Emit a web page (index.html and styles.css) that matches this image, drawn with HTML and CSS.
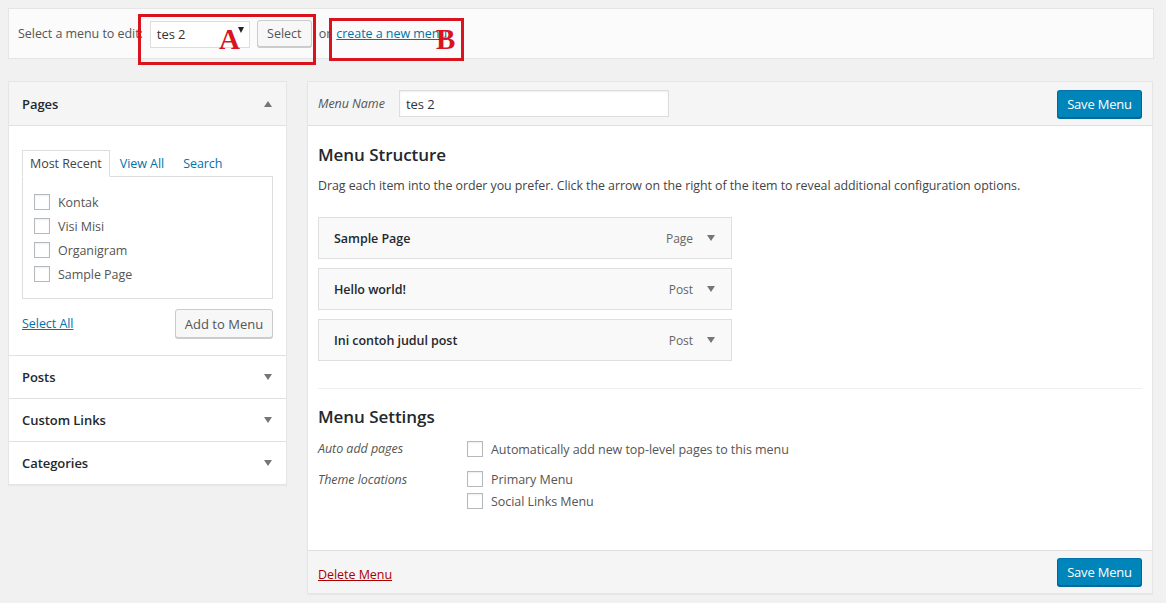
FILE: index.html
```html
<!DOCTYPE html>
<html>
<head>
<meta charset="utf-8">
<link rel="stylesheet" href="styles.css">
</head>
<body>
<div class="wrap">
  <div class="manage-menus">
    <span class="label">Select a menu to edit:</span>
    <div class="select-box"><span>tes 2</span><span class="caret"></span></div>
    <button class="btn">Select</button>
    <span class="or">or</span>
    <a class="link" href="#">create a new menu</a>
    <div class="mark mark-a"></div>
    <div class="mark mark-b"></div>
    <span class="letter letter-a">A</span>
    <span class="letter letter-b">B</span>
  </div>

  <div class="columns">
    <div class="side">
      <div class="acc open">
        <div class="acc-head head-gray"><span class="acc-title">Pages</span><span class="tri up"></span></div>
        <div class="acc-body">
          <div class="tabs">
            <span class="tab active">Most Recent</span>
            <span class="tab">View All</span>
            <span class="tab">Search</span>
          </div>
          <div class="tab-panel">
            <label class="chk"><span class="box"></span>Kontak</label>
            <label class="chk"><span class="box"></span>Visi Misi</label>
            <label class="chk"><span class="box"></span>Organigram</label>
            <label class="chk"><span class="box"></span>Sample Page</label>
          </div>
          <div class="acc-actions">
            <a class="link" href="#">Select All</a>
            <button class="btn add">Add to Menu</button>
          </div>
        </div>
      </div>
      <div class="acc"><div class="acc-head"><span class="acc-title">Posts</span><span class="tri"></span></div></div>
      <div class="acc"><div class="acc-head"><span class="acc-title">Custom Links</span><span class="tri"></span></div></div>
      <div class="acc"><div class="acc-head"><span class="acc-title">Categories</span><span class="tri"></span></div></div>
    </div>

    <div class="main">
      <div class="main-head">
        <span class="menu-name-label">Menu Name</span>
        <div class="name-input">tes 2</div>
        <button class="btn primary">Save Menu</button>
      </div>
      <div class="main-body">
        <h3 class="h3">Menu Structure</h3>
        <p class="desc">Drag each item into the order you prefer. Click the arrow on the right of the item to reveal additional configuration options.</p>
        <div class="items">
          <div class="item"><span class="item-title">Sample Page</span><span class="item-type">Page</span><span class="tri"></span></div>
          <div class="item"><span class="item-title">Hello world!</span><span class="item-type">Post</span><span class="tri"></span></div>
          <div class="item"><span class="item-title">Ini contoh judul post</span><span class="item-type">Post</span><span class="tri"></span></div>
        </div>
        <div class="sep"></div>
        <h3 class="h3 settings-h">Menu Settings</h3>
        <div class="setting-row">
          <span class="setting-label">Auto add pages</span>
          <div class="setting-opts">
            <label class="chk"><span class="box"></span>Automatically add new top-level pages to this menu</label>
          </div>
        </div>
        <div class="setting-row second">
          <span class="setting-label">Theme locations</span>
          <div class="setting-opts">
            <label class="chk tight"><span class="box"></span>Primary Menu</label>
            <label class="chk tight"><span class="box"></span>Social Links Menu</label>
          </div>
        </div>
      </div>
      <div class="main-foot">
        <a class="delete" href="#">Delete Menu</a>
        <button class="btn primary">Save Menu</button>
      </div>
    </div>
  </div>
</div>
</body>
</html>
```

FILE: styles.css
```css
* { box-sizing: border-box; }
html, body { margin: 0; padding: 0; }
body {
  background: #f1f1f1;
  font-family: "Open Sans", "Noto Sans", sans-serif;
  font-size: 12.5px;
  letter-spacing: -0.05px;
  color: #444;
  width: 1166px;
  height: 603px;
  overflow: hidden;
}
.wrap { padding: 8px 0 0 8px; width: 1162px; }

.manage-menus {
  position: relative;
  width: 1146px;
  height: 51px;
  background: #fbfbfb;
  border: 1px solid #e5e5e5;
  display: flex;
  align-items: center;
  padding-left: 9px;
}
.label { color: #555; margin-right: 7px; }
.select-box {
  width: 100px;
  height: 27px;
  border: 1px solid #ddd;
  background: #fff;
  display: flex;
  align-items: center;
  justify-content: space-between;
  padding: 0 5px 0 6px;
  color: #333;
  font-size: 13px;
  margin-top: 1px;
}
.caret {
  width: 0; height: 0;
  border-left: 3px solid transparent;
  border-right: 3px solid transparent;
  border-top: 6px solid #222;
  margin-top: -8px;
}
.btn {
  font-family: inherit;
  font-size: 12.5px;
  color: #555;
  background: #f7f7f7;
  border: 1px solid #ccc;
  border-radius: 3px;
  box-shadow: 0 1px 0 #ccc;
  height: 27px;
  padding: 0 9px;
  cursor: pointer;
}
.manage-menus .btn { margin-left: 7px; width: 55px; padding: 0; }
.or { color: #555; margin-left: 7px; margin-right: 5px; }
.link { color: #0073aa; text-decoration: underline; }

.mark { position: absolute; border: 3px solid #d9141f; }
.mark-a { left: 129px; top: 5px; width: 178px; height: 51px; }
.mark-b { left: 320px; top: 9px; width: 135px; height: 43px; }
.letter {
  position: absolute;
  font-family: "Liberation Serif", serif;
  font-weight: bold;
  font-size: 29px;
  color: #d9141f;
  line-height: 1;
}
.letter-a { left: 210px; top: 16px; }
.letter-b { left: 427px; top: 16px; }

.columns {
  display: flex;
  align-items: flex-start;
  gap: 20px;
  margin-top: 22px;
}
.side {
  width: 279px;
  border: 1px solid #e5e5e5;
  box-shadow: 0 1px 1px rgba(0,0,0,0.04);
  background: #fff;
}
.acc + .acc { border-top: 1px solid #e1e1e1; }
.acc-head {
  height: 42px;
  display: flex;
  align-items: center;
  justify-content: space-between;
  padding: 0 14px 0 13px;
  background: #fff;
}
.acc.open .acc-head { height: 44px; background: #f5f5f5; border-bottom: 1px solid #e1e1e1; }
.acc-title { font-size: 13px; font-weight: 600; color: #23282d; }
.tri {
  width: 0; height: 0;
  border-left: 4px solid transparent;
  border-right: 4px solid transparent;
  border-top: 6px solid #72777c;
}
.tri.up { border-top: 0; border-bottom: 6px solid #72777c; }

.acc-body { padding: 24px 13px 17px 13px; }
.tabs { display: flex; height: 26px; align-items: stretch; }
.tab {
  display: flex; align-items: center;
  padding: 0 8px 0 8px;
  color: #0073aa;
  border: 1px solid transparent;
  margin-right: 1px;
}
.tab.active {
  color: #444;
  border-color: #ddd;
  border-bottom-color: #fff;
  background: #fff;
  position: relative;
  z-index: 1;
  margin-bottom: -1px;
  padding: 0 7px;
}
.tab-panel {
  border: 1px solid #ddd;
  height: 123px;
  padding: 13px 11px 0 11px;
}
.chk { display: flex; align-items: center; height: 24px; color: #555; }
.box {
  width: 16px; height: 16px;
  border: 1px solid #b4b9be;
  background: #fff;
  box-shadow: inset 0 1px 2px rgba(0,0,0,0.07);
  margin-right: 8px;
  flex: none;
}
.acc-actions {
  display: flex; justify-content: space-between; align-items: center;
  margin-top: 10px;
}
.btn.add { height: 29px; width: 98px; padding: 0; font-size: 13px; }

.main {
  width: 846px;
  border: 1px solid #e5e5e5;
  box-shadow: 0 1px 1px rgba(0,0,0,0.04);
  background: #fff;
}
.main-head {
  height: 44px;
  background: #f5f5f5;
  border-bottom: 1px solid #dfdfdf;
  display: flex;
  align-items: center;
  padding: 0 10px 0 10px;
}
.menu-name-label { font-style: italic; color: #555; width: 81px; }
.name-input {
  width: 270px; height: 27px;
  border: 1px solid #ddd;
  background: #fff;
  display: flex; align-items: center;
  padding: 0 6px;
  font-size: 13px;
  color: #333;
  box-shadow: inset 0 1px 2px rgba(0,0,0,0.07);
}
.btn.primary {
  margin-left: auto;
  background: #0085ba;
  border-color: #0073aa #006799 #006799;
  box-shadow: 0 1px 0 #006799;
  color: #fff;
  width: 85px; height: 28px; padding: 0;
  font-size: 13px;
  letter-spacing: -0.2px;
}
.main-body { padding: 17px 10px 24px 10px; height: 424px; }
.h3 { margin: 0; font-size: 17px; font-weight: 600; color: #23282d; line-height: 24px; }
.desc { margin: 10px 0 0 0; color: #444; line-height: 18px; font-size: 12.4px; }
.items { margin-top: 22px; display: flex; flex-direction: column; gap: 9px; }
.item {
  width: 414px; height: 42px;
  border: 1px solid #dfdfdf;
  background: #f9f9f9;
  display: flex; align-items: center;
  padding: 0 16px 0 15px;
}
.item-title { font-weight: 600; color: #23282d; font-size: 12.5px; }
.item-type { margin-left: auto; color: #666; margin-right: 14px; font-size: 12px; }
.sep { border-top: 1px solid #eee; margin-top: 27px; }
.settings-h { margin-top: 16px; }
.setting-row { display: flex; margin-top: 11px; }
.setting-row.second { margin-top: 10px; }
.setting-label { width: 149px; font-style: italic; color: #555; line-height: 17px; }
.setting-opts { display: flex; flex-direction: column; }
.chk.tight { height: 22px; }
.setting-row .chk { margin-top: -3px; }
.setting-row .chk.tight + .chk.tight { margin-top: 0; }

.main-foot {
  height: 43px;
  background: #f5f5f5;
  border-top: 1px solid #dfdfdf;
  display: flex; align-items: center;
  padding: 0 10px;
}
.delete { color: #a00; text-decoration: underline; margin-top: 4px; }
```
